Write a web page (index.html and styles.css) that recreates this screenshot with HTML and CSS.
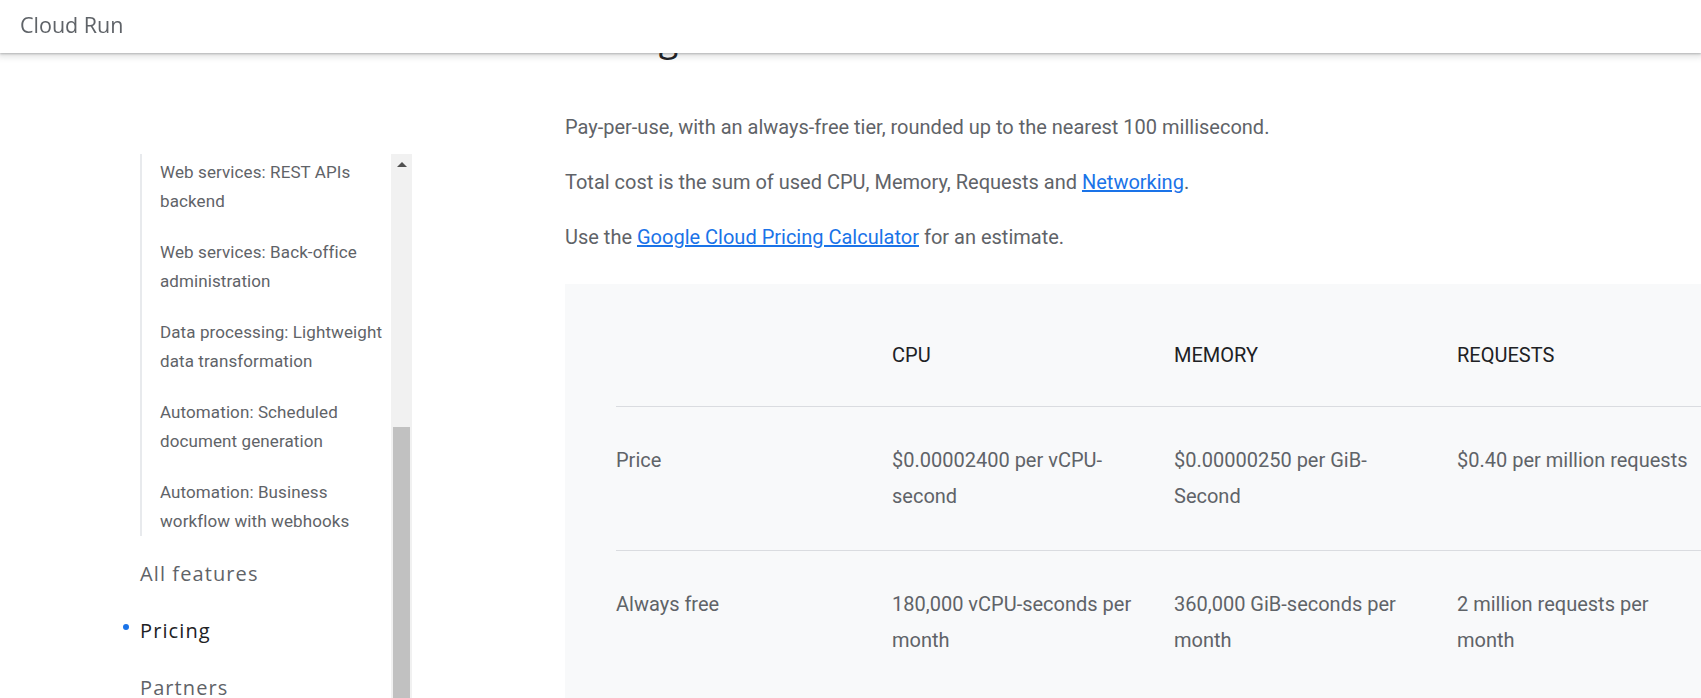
FILE: index.html
```html
<!DOCTYPE html>
<html lang="en">
<head>
<meta charset="utf-8">
<title>Cloud Run</title>
<link rel="stylesheet" href="styles.css">
</head>
<body>
<header class="topbar">
  <span class="product">Cloud Run</span>
</header>
<div class="page">
  <aside class="sidebar">
    <nav class="nav">
      <ul class="sublist">
        <li>Web services: REST APIs backend</li>
        <li>Web services: Back-office administration</li>
        <li>Data processing: Lightweight data transformation</li>
        <li>Automation: Scheduled document generation</li>
        <li>Automation: Business workflow with webhooks</li>
      </ul>
      <ul class="toplist">
        <li>All features</li>
        <li class="active">Pricing</li>
        <li>Partners</li>
      </ul>
    </nav>
    <div class="scrollbar">
      <div class="sb-button"><span class="sb-arrow"></span></div>
      <div class="sb-thumb"></div>
    </div>
  </aside>
  <main class="main">
    <h1 class="title">Pricing</h1>
    <p>Pay-per-use, with an always-free tier, rounded up to the nearest 100 millisecond.</p>
    <p>Total cost is the sum of used CPU, Memory, Requests and <a href="#">Networking</a>.</p>
    <p>Use the <a href="#">Google Cloud Pricing Calculator</a> for an estimate.</p>
    <div class="table-wrap">
      <table class="pricing">
        <colgroup>
          <col class="c-label"><col class="c-cpu"><col class="c-mem"><col class="c-req">
        </colgroup>
        <thead>
          <tr><th></th><th>CPU</th><th>MEMORY</th><th>REQUESTS</th></tr>
        </thead>
        <tbody>
          <tr><td>Price</td><td>$0.00002400 per vCPU-second</td><td>$0.00000250 per GiB-Second</td><td>$0.40 per million requests</td></tr>
          <tr class="last"><td>Always free</td><td>180,000 vCPU-seconds per month</td><td>360,000 GiB-seconds per month</td><td>2 million requests per month</td></tr>
        </tbody>
      </table>
    </div>
  </main>
</div>
</body>
</html>
```

FILE: styles.css
```css
html, body {
  margin: 0;
  padding: 0;
  background: #ffffff;
  overflow: hidden;
  height: 100%;
}
body {
  font-family: Roboto, "Liberation Sans", sans-serif;
  color: #5f6368;
}
.topbar {
  position: fixed;
  top: 0;
  left: 0;
  right: 0;
  height: 53px;
  background: #ffffff;
  box-shadow: 0 1px 2px rgba(60,64,67,0.3), 0 2px 6px 2px rgba(60,64,67,0.15);
  display: flex;
  align-items: center;
  padding: 0 0 5px 20px;
  box-sizing: border-box;
  z-index: 10;
}
.product {
  font-family: "Open Sans", Roboto, sans-serif;
  font-size: 21.5px;
  color: #5f6368;
}
.page {
  display: flex;
  height: 100%;
}
.sidebar {
  flex: none;
  width: 412px;
  height: 100%;
  box-sizing: border-box;
  padding-top: 154px;
  display: flex;
}
.nav {
  flex: none;
  width: 391px;
  overflow: hidden;
  box-sizing: border-box;
  padding-left: 140px;
}
.nav ul {
  list-style: none;
  margin: 0;
  padding: 0;
}
.nav .sublist {
  border-left: 2px solid #e8eaed;
  padding: 4px 0 0 18px;
  font-size: 17px;
  letter-spacing: 0.1px;
  line-height: 29px;
  color: #5f6368;
}
.sublist li + li {
  margin-top: 22px;
}
.nav .toplist {
  margin-top: 9px;
  font-family: "Open Sans", Roboto, sans-serif;
  font-size: 20px;
  letter-spacing: 1.1px;
  line-height: 24px;
  color: #5f6368;
}
.toplist li {
  padding: 17px 0 16px;
  position: relative;
}
.toplist li.active {
  color: #202124;
}
.toplist li.active::before {
  content: "";
  position: absolute;
  left: -17px;
  top: 22px;
  width: 6px;
  height: 6px;
  border-radius: 50%;
  background: #1a73e8;
}
.scrollbar {
  flex: none;
  width: 21px;
  background: #f1f1f1;
  display: flex;
  flex-direction: column;
  align-items: center;
}
.sb-button {
  height: 21px;
  width: 100%;
  display: flex;
  align-items: center;
  justify-content: center;
}
.sb-arrow {
  width: 0;
  height: 0;
  border-left: 5px solid transparent;
  border-right: 5px solid transparent;
  border-bottom: 5px solid #505050;
}
.sb-thumb {
  margin-top: 252px;
  width: 17px;
  flex: 1;
  background: #c1c1c1;
}
.main {
  flex: 1;
  min-width: 0;
  margin-left: 153px;
  padding-top: 18px;
}
.title {
  font-family: "Open Sans", Roboto, sans-serif;
  font-weight: 400;
  font-size: 36px;
  letter-spacing: 0;
  line-height: 40px;
  color: #202124;
  margin: 0 0 54px;
}
.main p {
  font-size: 20px;
  line-height: 30px;
  margin: 0 0 25px;
  color: #5f6368;
  white-space: nowrap;
}
.main p:last-of-type {
  margin-bottom: 32px;
}
.main a {
  color: #1a73e8;
  text-decoration: underline;
}
.table-wrap {
  background: #f8f9fa;
  padding: 18px 0 40px 51px;
  width: 1300px;
}
.pricing {
  border-collapse: collapse;
  table-layout: fixed;
  width: 1240px;
  font-size: 20px;
  line-height: 36px;
}
.c-label { width: 276px; }
.c-cpu { width: 282px; }
.c-mem { width: 283px; }
.c-req { width: 399px; }
.pricing th {
  text-align: left;
  font-weight: 400;
  color: #202124;
  padding: 35px 32px 33px 0;
  border-bottom: 1px solid #dadce0;
  vertical-align: top;
}
.pricing td {
  text-align: left;
  vertical-align: top;
  color: #5f6368;
  padding: 35px 32px 36px 0;
  border-bottom: 1px solid #dadce0;
}
.pricing tr.last td {
  border-bottom: none;
}
.pricing td:last-child, .pricing th:last-child {
  padding-right: 149px;
}
```
